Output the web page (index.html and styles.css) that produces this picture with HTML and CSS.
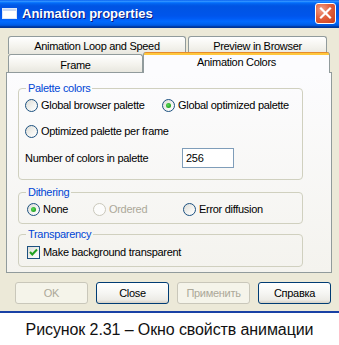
FILE: index.html
```html
<!DOCTYPE html>
<html>
<head>
<meta charset="utf-8">
<link rel="stylesheet" href="styles.css">
</head>
<body>
<div class="window">
  <div class="titlebar">
    <svg class="appicon" width="15" height="11" viewBox="0 0 15 11">
      <rect x="0.5" y="0.5" width="14" height="10" fill="#fff" stroke="#dfe8f7"/>
      <rect x="1" y="1" width="13" height="2" fill="#c8d8f4"/>
    </svg>
    <span class="title">Animation properties</span>
    <div class="close">
      <svg width="21" height="21" viewBox="0 0 21 21">
        <path d="M6 5.5 L15 14.5 M15 5.5 L6 14.5" stroke="#fff" stroke-width="2.2" stroke-linecap="square"/>
      </svg>
    </div>
  </div>
  <div class="client">
    <div class="tabs">
      <div class="tabrow">
        <div class="tab t-loop">Animation Loop and Speed</div>
        <div class="tab t-prev">Preview in Browser</div>
      </div>
      <div class="tabrow">
        <div class="tab t-frame">Frame</div>
        <div class="tab t-colors">Animation Colors</div>
      </div>
    </div>
    <div class="panel">
      <fieldset class="group g-palette">
        <legend>Palette colors</legend>
        <div class="prow prow1">
          <label class="opt"><span class="radio"></span>Global browser palette</label>
          <label class="opt"><span class="radio on"></span>Global optimized palette</label>
        </div>
        <div class="prow prow2">
          <label class="opt"><span class="radio"></span>Optimized palette per frame</label>
        </div>
        <div class="prow prow3">
          <span class="numlabel">Number of colors in palette</span>
          <span class="input">256</span>
        </div>
      </fieldset>
      <fieldset class="group g-dither">
        <legend>Dithering</legend>
        <div class="drow">
          <label class="opt"><span class="radio on"></span>None</label>
          <label class="opt disabled"><span class="radio"></span>Ordered</label>
          <label class="opt"><span class="radio"></span>Error diffusion</label>
        </div>
      </fieldset>
      <fieldset class="group g-trans">
        <legend>Transparency</legend>
        <div class="trow">
          <label class="opt"><span class="check"><svg width="11" height="11" viewBox="0 0 11 11"><path d="M2 5 L4.3 7.5 L9 2.5" fill="none" stroke="#21a121" stroke-width="2"/></svg></span>Make background transparent</label>
        </div>
      </fieldset>
    </div>
    <div class="buttons">
      <div class="btn disabled">OK</div>
      <div class="btn">Close</div>
      <div class="btn disabled">Применить</div>
      <div class="btn">Справка</div>
    </div>
  </div>
</div>
<div class="caption">Рисунок 2.31 – Окно свойств анимации</div>
</body>
</html>
```
FILE: styles.css
```css
html, body {
  margin: 0;
  padding: 0;
}
body {
  width: 339px;
  height: 345px;
  overflow: hidden;
  background: #fff;
  font-family: "Liberation Sans", Arial, sans-serif;
  font-size: 11px;
  color: #000;
}
.window {
  background: #ece9d8;
  border-bottom: 2px solid #1941a5;
}
.titlebar {
  height: 28px;
  box-sizing: border-box;
  display: flex;
  align-items: center;
  padding: 0 3px 0 2px;
  background: linear-gradient(to bottom, #0058ee 0%, #3593ff 4%, #288eff 6%, #127dff 8%, #036ffc 10%, #0262ee 14%, #0057e5 20%, #0054e3 24%, #0055eb 56%, #005bf5 66%, #026afe 76%, #0062ef 86%, #0052d6 92%, #0040ab 94%, #003092 100%);
}
.appicon {
  display: block;
  margin-top: -2px;
}
.title {
  margin-left: 5px;
  color: #fff;
  font-weight: bold;
  font-size: 13px;
  text-shadow: 1px 1px 0 #0a1a80;
  margin-top: -1px;
}
.close {
  margin-left: auto;
  width: 21px;
  height: 21px;
  box-sizing: border-box;
  border: 1px solid #fff;
  border-radius: 3px;
  background: radial-gradient(circle at 30% 30%, #f0a08a 0%, #e2603d 45%, #c93c1a 100%);
  margin-top: -1px;
}
.close svg {
  display: block;
  margin: -1px 0 0 -1px;
}
.client {
  height: 283px;
  box-sizing: border-box;
  padding: 8px 6px 0;
  letter-spacing: -0.3px;
}
.tabs {
  padding-left: 2px;
}
.tabrow {
  display: flex;
  gap: 2px;
  height: 18px;
}
.tabrow + .tabrow {
  gap: 0;
}
.tab {
  box-sizing: border-box;
  height: 18px;
  border: 1px solid #919b9c;
  border-bottom: none;
  border-radius: 3px 3px 0 0;
  background: linear-gradient(#ffffff, #f3f2ec 60%, #e8e7df);
  display: flex;
  align-items: center;
  justify-content: center;
  white-space: nowrap;
}
.t-loop { width: 178px; }
.t-prev { width: 139px; }
.t-frame { width: 135px; padding-top: 2px; }
.t-colors {
  width: 187px;
  height: 21px;
  margin-top: -2px;
  position: relative;
  z-index: 1;
  border-top: none;
  border-radius: 3px 3px 0 0;
  background: linear-gradient(#e68b2c 0, #e68b2c 1px, #ffc73c 1px, #ffc73c 3px, #fcfcfe 3px);
  align-items: flex-start;
  padding-top: 4px;
}
.panel {
  width: 326px;
  height: 201px;
  box-sizing: border-box;
  border: 1px solid #919b9c;
  background: linear-gradient(#fcfcfe, #f4f3ee);
  padding: 0 0 0 11px;
}
.group {
  width: 285px;
  box-sizing: border-box;
  margin: 0;
  padding: 0;
  border: 1px solid #d0d0bf;
  border-radius: 4px;
  min-inline-size: 0;
}
.group legend {
  margin-left: 7px;
  padding: 0 2px;
  line-height: 13px;
  color: #0046d5;
}
.opt {
  display: flex;
  align-items: center;
  gap: 3px;
  white-space: nowrap;
}
.opt.disabled {
  color: #aca899;
}
.radio {
  width: 13px;
  height: 13px;
  box-sizing: border-box;
  border-radius: 50%;
  border: 1px solid #1c5180;
  background: linear-gradient(135deg, #dcdcd7 0%, #f4f4f1 60%, #ffffff 100%);
  display: flex;
  align-items: center;
  justify-content: center;
  flex: none;
}
.disabled .radio {
  border-color: #cac8bb;
  background: #fcfcfb;
}
.radio.on::after {
  content: "";
  width: 5px;
  height: 5px;
  border-radius: 50%;
  background: radial-gradient(circle at 40% 40%, #5bdc57 0%, #21a121 70%, #1a8a1a 100%);
}
.check {
  width: 13px;
  height: 13px;
  box-sizing: border-box;
  border: 1px solid #1c5180;
  background: linear-gradient(135deg, #dcdcd7 0%, #f4f4f1 60%, #ffffff 100%);
  display: flex;
  align-items: center;
  justify-content: center;
  flex: none;
}
.check svg {
  display: block;
}
.g-palette {
  margin-top: 9px;
  padding-bottom: 11px;
}
.prow {
  display: flex;
  align-items: center;
  height: 20px;
  padding-left: 6px;
}
.prow1 .opt:first-child {
  width: 137px;
}
.prow2 {
  margin-top: 6px;
}
.prow3 {
  margin-top: 7px;
}
.numlabel {
  width: 157px;
}
.input {
  width: 52px;
  height: 20px;
  box-sizing: border-box;
  border: 1px solid #7f9db9;
  background: #fff;
  padding-left: 3px;
  display: flex;
  align-items: center;
}
.g-dither {
  margin-top: 6px;
  padding-bottom: 4px;
}
.drow {
  display: grid;
  grid-template-columns: 66px 90px auto;
  align-items: center;
  height: 20px;
  padding-left: 8px;
}
.g-trans {
  margin-top: 4px;
  padding-bottom: 3px;
}
.trow {
  display: flex;
  align-items: center;
  height: 22px;
  padding-left: 8px;
}
.buttons {
  display: flex;
  gap: 8px;
  margin-top: 9px;
  padding-left: 9px;
}
.btn {
  width: 73px;
  height: 22px;
  box-sizing: border-box;
  border: 1px solid #003c74;
  border-radius: 3px;
  background: linear-gradient(#ffffff, #f6f6f3 50%, #ecebe6 85%, #d6d0c5);
  display: flex;
  align-items: center;
  justify-content: center;
}
.btn.disabled {
  border-color: #c9c7ba;
  background: #f5f4ea;
  color: #aca899;
}
.caption {
  height: 32px;
  display: flex;
  align-items: center;
  justify-content: center;
  font-size: 16px;
  color: #111;
  padding-top: 1px;
  box-sizing: border-box;
  letter-spacing: -0.1px;
}
```
